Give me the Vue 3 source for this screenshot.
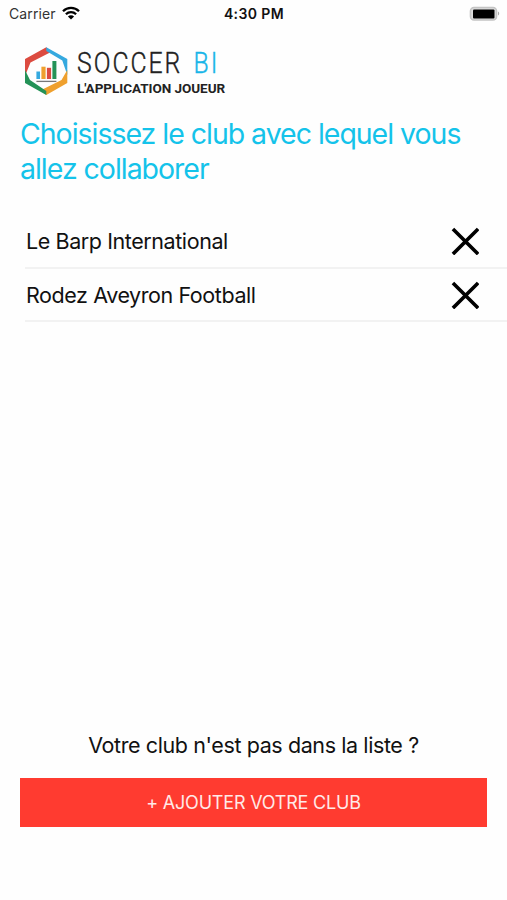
<script setup>
import { ref } from 'vue';

const clubs = ref([
  { id: 1, name: 'Le Barp International' },
  { id: 2, name: 'Rodez Aveyron Football' }
]);

function removeClub(id) {
  clubs.value = clubs.value.filter((club) => club.id !== id);
}
</script>

<template>
  <div class="screen">
    <div class="status-bar">
      <div class="carrier">
        <span class="carrier-name">Carrier</span>
        <svg class="wifi" width="18" height="14" viewBox="0 0 18 14">
          <g fill="none" stroke="#000" stroke-width="2.3">
            <path d="M1 5.2a11.4 11.4 0 0 1 16 0" />
            <path d="M3.9 8.2a7.3 7.3 0 0 1 10.2 0" />
          </g>
          <path d="M9 13.6 5.9 10.5a4.4 4.4 0 0 1 6.2 0z" />
        </svg>
      </div>
      <div class="time">4:30 PM</div>
      <svg class="battery" width="32" height="16" viewBox="0 0 32 16">
        <rect x="1.5" y="1.5" width="26" height="12.5" rx="3.5" fill="#ddd" stroke="#c4c4c4" stroke-width="1.6" />
        <rect x="4" y="3.5" width="21.5" height="9" rx="1" />
        <path d="M29 5.5v4c1.6-.6 1.6-3.4 0-4z" fill="#aaa" />
      </svg>
    </div>

    <header class="logo">
      <svg width="44" height="50" viewBox="0 0 44 50">
        <path d="M22.3 1.3 1 13v17l5.5-13.5L27 6z" fill="#dc4b40" />
        <path d="M22.3 1.3 43.3 13v16l-5-14.5L22.3 5z" fill="#35a9df" />
        <path d="M43.3 24v13L22.3 49l-6-4.5L37.5 34z" fill="#efa02e" />
        <path d="M1 24v13l21.3 12v-4L6 34z" fill="#249257" />
        <rect x="12.4" y="25.5" width="3.6" height="7.5" fill="#35a9df" />
        <rect x="17.4" y="20.7" width="4.2" height="12.3" fill="#efa02e" />
        <rect x="22.9" y="21.8" width="4.2" height="11.2" fill="#dc4b40" />
        <rect x="28.4" y="15" width="4" height="18" fill="#249257" />
        <path d="M12.4 35.4h20" stroke="#777" stroke-width="1.3" />
      </svg>
      <div class="logo-text">
        <div class="logo-name">SOCCER <span>BI</span></div>
        <div class="logo-tagline">L'APPLICATION JOUEUR</div>
      </div>
    </header>

    <h1 class="title">Choisissez le club avec lequel vous<br />allez collaborer</h1>

    <ul class="club-list">
      <li v-for="club in clubs" :key="club.id" class="club">
        <span class="club-name">{{ club.name }}</span>
        <button class="btn-remove" aria-label="Supprimer" @click="removeClub(club.id)">
          <svg width="28" height="28" viewBox="0 0 28 28">
            <path d="M3.2 3.2l22.6 22.6M25.8 3.2 3.2 25.8" stroke="#000" stroke-width="3.6" stroke-linecap="square" />
          </svg>
        </button>
      </li>
    </ul>

    <footer class="footer">
      <p class="question">Votre club n'est pas dans la liste ?</p>
      <button class="btn-add">+ AJOUTER VOTRE CLUB</button>
    </footer>
  </div>
</template>

<style>
body {
  margin: 0;
  background: #fff;
}
</style>

<style scoped>
.screen {
  display: flex;
  flex-direction: column;
  width: 507px;
  height: 900px;
  box-sizing: border-box;
  overflow: hidden;
  background: #fefefe;
  color: #111;
  font-family: Inter, "Liberation Sans", sans-serif;
}

.status-bar {
  display: grid;
  grid-template-columns: 1fr auto 1fr;
  align-items: center;
  height: 27px;
  padding: 0 6px 0 9px;
}

.carrier {
  display: flex;
  align-items: center;
  gap: 6px;
  font-size: 14px;
  letter-spacing: 0.1px;
  color: #333;
}

.wifi {
  margin-bottom: 2px;
}

.time {
  margin-right: 2px;
  font-size: 14px;
  font-weight: 600;
  letter-spacing: 0.4px;
}

.battery {
  justify-self: end;
}

.logo {
  display: flex;
  gap: 9px;
  height: 50px;
  padding: 19px 0 0 24px;
}

.logo-text {
  font-family: Roboto, sans-serif;
  white-space: nowrap;
}

/* condensed wordmark */
.logo-name {
  height: 34px;
  line-height: 33px;
  font-size: 30px;
  font-weight: 300;
  letter-spacing: 2.4px;
  word-spacing: 4px;
  color: #222;
  -webkit-text-stroke: 0.4px;
  transform: scaleX(0.825);
  transform-origin: left;
}

.logo-name span {
  color: #18b5e8;
}

.logo-tagline {
  line-height: 16px;
  font-size: 13.5px;
  font-weight: 700;
  letter-spacing: -0.04px;
  color: #222;
}

.title {
  margin: 20px 0 0 20px;
  font-size: 28.5px;
  line-height: 35px;
  font-weight: 400;
  letter-spacing: -1.03px;
  color: #14c3ea;
  white-space: nowrap;
}

.club-list {
  margin: 29px 0 0 25px;
  padding: 0;
  list-style: none;
}

.club {
  display: flex;
  align-items: center;
  justify-content: space-between;
  height: 53.5px;
  box-sizing: border-box;
  padding: 1px 28px 0 1px;
  border-bottom: 2px solid #f2f2f2;
}

.club-name {
  font-size: 21.5px;
  letter-spacing: -0.42px;
}

.btn-remove {
  display: flex;
  padding: 0;
  border: none;
  background: none;
  cursor: pointer;
}

.footer {
  margin: auto 20px 73px;
  text-align: center;
}

.question {
  margin: 0 0 18px;
  font-size: 21.5px;
  line-height: 30px;
  letter-spacing: -0.4px;
}

.btn-add {
  display: block;
  width: 467px;
  height: 49px;
  padding: 0;
  border: none;
  background: #ff3b30;
  color: #ffe9e7;
  font-family: inherit;
  font-size: 18px;
  letter-spacing: -0.2px;
  cursor: pointer;
}
</style>
